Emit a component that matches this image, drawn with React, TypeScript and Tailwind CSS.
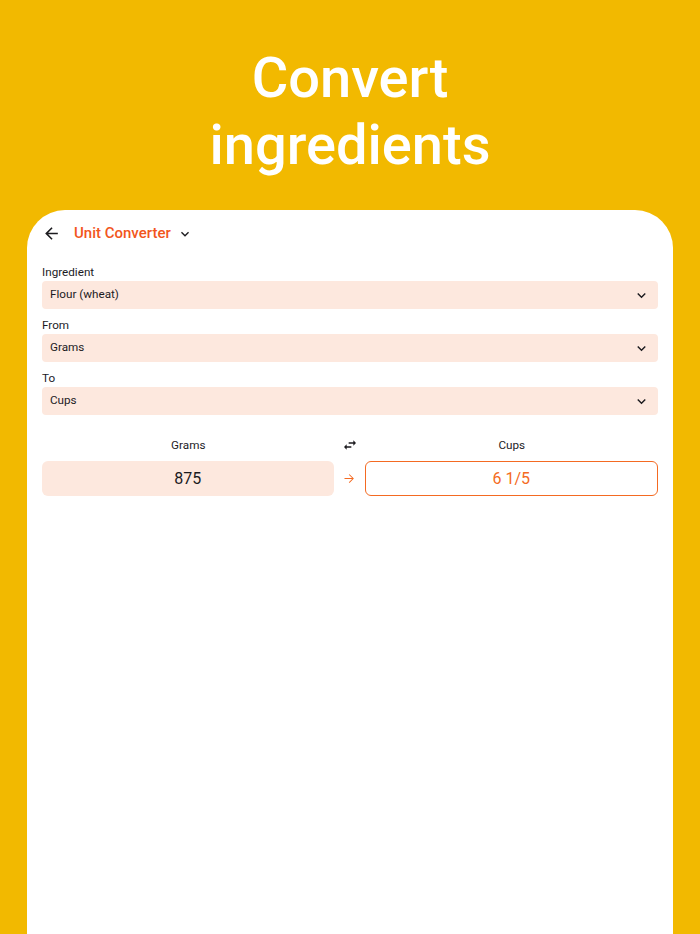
import React from "react";

const Chevron = ({ className = "" }: { className?: string }) => (
  <svg viewBox="0 0 24 24" className={className} fill="currentColor">
    <path d="M16.59 8.59L12 13.17 7.41 8.59 6 10l6 6 6-6z" />
  </svg>
);

const Select = ({ label, value }: { label: string; value: string }) => (
  <div className="flex flex-col">
    <div className="text-[11.7px] leading-[16px] text-[#1c1b1f]">{label}</div>
    <div className="mt-[1px] flex h-[28px] items-center justify-between rounded-[4px] bg-[#fde8de] pl-[8px] pr-[8px]">
      <span className="text-[11.7px] text-[#1c1b1f]">{value}</span>
      <Chevron className="h-[17px] w-[17px] text-[#1c1b1f]" />
    </div>
  </div>
);

export default function App() {
  return (
    <div className="flex h-[934px] w-[700px] flex-col overflow-hidden bg-[#f2b900]" style={{ fontFamily: "Roboto, 'Noto Sans', sans-serif" }}>
      <div className="flex flex-col items-center pt-[45px] text-center text-[56px] font-medium leading-[67px] text-white">
        <div>Convert</div>
        <div>ingredients</div>
      </div>
      <div className="mx-[27px] mt-[31px] flex flex-1 flex-col rounded-t-[38px] bg-white px-[15px]">
        <div className="flex h-[46px] items-center pt-[1px]">
          <svg viewBox="0 0 24 24" className="h-[19px] w-[19px] text-[#1c1b1f]" fill="currentColor">
            <path d="M20 11H7.83l5.59-5.59L12 4l-8 8 8 8 1.41-1.41L7.83 13H20v-2z" />
          </svg>
          <span className="ml-[13px] text-[15px] font-medium text-[#f2561c]">Unit Converter</span>
          <Chevron className="ml-[6px] h-[16px] w-[16px] text-[#1c1b1f]" />
        </div>
        <div className="mt-[8px] flex flex-col gap-[8px]">
          <Select label="Ingredient" value="Flour (wheat)" />
          <Select label="From" value="Grams" />
          <Select label="To" value="Cups" />
        </div>
        <div className="mt-[22px] flex items-center text-[11.7px] leading-[16px] text-[#1c1b1f]">
          <div className="flex-1 text-center">Grams</div>
          <div className="flex w-[31px] justify-center">
            <svg viewBox="0 0 24 24" className="h-[16px] w-[16px]" fill="currentColor">
              <path d="M6.99 11L3 15l3.99 4v-3H14v-2H6.99v-3zM21 9l-3.99-4v3H10v2h7.01v3L21 9z" />
            </svg>
          </div>
          <div className="flex-1 text-center">Cups</div>
        </div>
        <div className="mt-[8px] flex items-center">
          <div className="flex h-[35px] flex-1 items-center justify-center rounded-[6px] bg-[#fde8de] text-[16px] text-[#1c1b1f]">875</div>
          <div className="flex w-[31px] justify-center">
            <svg viewBox="0 0 24 24" className="h-[15px] w-[15px] text-[#f46a22]" fill="currentColor">
              <path d="M12 4l-1.06 1.06L16.13 10.25H4v1.5h12.13l-5.19 5.19L12 18l7-7z" transform="translate(0 1)" />
            </svg>
          </div>
          <div className="flex h-[35px] flex-1 items-center justify-center rounded-[6px] border-[1.5px] border-[#f46a22] text-[16px] text-[#f46a22]">6 1/5</div>
        </div>
      </div>
    </div>
  );
}
